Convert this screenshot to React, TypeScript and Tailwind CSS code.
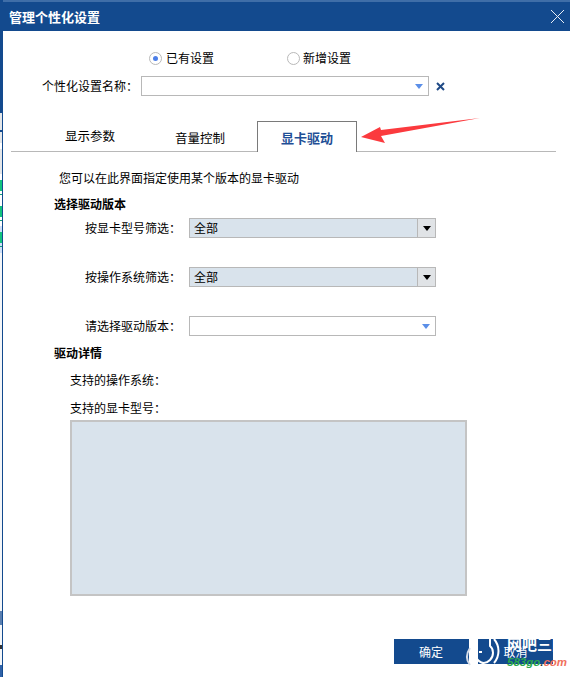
import React from 'react';

const font = { fontFamily: '"Noto Sans CJK SC", "Liberation Sans", sans-serif' };

const Caret = ({ color }: { color: string }) => (
  <svg width="8" height="5" viewBox="0 0 8 5">
    <path d="M0 0H8L4 5Z" fill={color} />
  </svg>
);

const Radio = ({ checked }: { checked?: boolean }) => (
  <span className="w-[13px] h-[13px] rounded-full border border-[#b9b9b9] bg-white flex items-center justify-center">
    {checked && <span className="w-[5px] h-[5px] rounded-full bg-[#4d7fe8]" />}
  </span>
);

const FilterRow = ({ label, className }: { label: string; className?: string }) => (
  <div className={`flex items-center h-5 ${className ?? ''}`}>
    <span className="w-[104px] text-xs text-black whitespace-nowrap">{label}</span>
    <div className="w-[247px] h-5 border border-[#b8b8b8] bg-[#d9e3ec] flex">
      <span className="flex-1 pl-1 text-xs leading-[18px] text-black">全部</span>
      <span className="w-[18px] border-l border-[#b8b8b8] bg-[#e0e3e6] flex items-center justify-center">
        <Caret color="#000" />
      </span>
    </div>
  </div>
);

export default function App() {
  return (
    <div className="relative w-[570px] h-[677px] bg-white overflow-hidden flex" style={font}>
      {/* 背后窗口露出的一条 */}
      <div className="w-[2px] h-full flex flex-col bg-[#f4f6f8]">
        <div className="h-[113px] bg-[#134a8e]" />
        <div className="h-[17px] bg-[#e4e6e8]" />
        <div className="h-[2px] bg-[#134a8e]" />
        <div className="h-[11px] bg-[#e4e6e8]" />
        <div className="h-[6px] bg-white" />
        <div className="h-[25px] bg-[#e4e6e8]" />
        <div className="h-[6px] bg-white" />
        <div className="h-[11px] bg-[#12c47e]" />
        <div className="h-[3px] bg-white" />
        <div className="h-[1px] bg-[#12a07a]" />
        <div className="h-[11px] bg-white" />
        <div className="h-[11px] bg-[#12c47e]" />
        <div className="h-[3px] bg-white" />
        <div className="h-[1px] bg-[#12a07a]" />
        <div className="h-[5px] bg-white" />
        <div className="h-[6px] bg-[#cfe0f8]" />
        <div className="h-[11px] bg-[#12c47e]" />
        <div className="h-[3px] bg-[#cfe0f8]" />
        <div className="h-[1px] bg-[#12a07a]" />
        <div className="h-[6px] bg-[#cfe0f8]" />
        <div className="flex-1" />
        <div className="h-[14px] bg-[#5a7fb0]" />
        <div className="h-[20px]" />
        <div className="h-[4px] bg-[#333]" />
        <div className="h-[16px]" />
        <div className="h-[12px] bg-[#2f62a8]" />
      </div>

      <div className="flex-1 flex flex-col border-l border-[#134a8e] relative">
        {/* 标题栏 */}
        <div className="h-[31px] border-t-[2px] border-[#3f6ea8] bg-[#134a8e] flex items-center justify-between pl-[6px] pr-[5px] shrink-0">
          <span className="text-[13px] font-bold text-white leading-none">管理个性化设置</span>
          <svg width="15" height="15" viewBox="0 0 15 15" fill="none" stroke="#e8eef6" strokeWidth="1">
            <path d="M1 1L14 14M14 1L1 14" />
          </svg>
        </div>

        {/* 单选 */}
        <div className="flex items-center h-[14px] mt-[20px] pl-[146px] text-xs text-black">
          <Radio checked />
          <span className="ml-[4px] w-[121px]">已有设置</span>
          <Radio />
          <span className="ml-[3px]">新增设置</span>
        </div>

        {/* 名称 */}
        <div className="flex items-center mt-[11px] h-5 pl-[39px]">
          <span className="w-[99px] text-xs text-black whitespace-nowrap">个性化设置名称：</span>
          <div className="w-[288px] h-5 border border-[#b8b8b8] flex items-center justify-end pr-[5px]">
            <Caret color="#5b8fe8" />
          </div>
          <svg className="ml-[7px]" width="9" height="9" viewBox="0 0 9 9" fill="none" stroke="#1f4a86" strokeWidth="2">
            <path d="M1 1L8 8M8 1L1 8" />
          </svg>
        </div>

        {/* 标签页 */}
        <div className="flex items-end h-[31px] mt-[25px] ml-[8px] w-[545px] border-b border-[#b8b8b8]">
          <div className="w-[101px] text-[12.5px] text-black pb-[5px] pl-[54px] whitespace-nowrap">显示参数</div>
          <div className="w-[146px] text-[12.5px] text-black pb-[3px] pl-[63px] whitespace-nowrap">音量控制</div>
          <div className="w-[100px] h-[31px] -mb-[1px] -ml-[1px] border border-b-0 border-[#7a7a7a] bg-white text-center text-[13px] font-bold text-[#1f4f96] leading-[32px]">
            显卡驱动
          </div>
        </div>

        {/* 说明 */}
        <div className="mt-[17px] pl-[56px] text-xs text-black leading-[18px]">您可以在此界面指定使用某个版本的显卡驱动</div>
        <div className="mt-[8px] pl-[51px] text-xs font-bold text-black leading-[18px]">选择驱动版本</div>

        <div className="pl-[82px]">
          <FilterRow label="按显卡型号筛选：" className="mt-[5px]" />
          <FilterRow label="按操作系统筛选：" className="mt-[29px]" />
          <div className="flex items-center h-5 mt-[29px]">
            <span className="w-[104px] text-xs text-black whitespace-nowrap">请选择驱动版本：</span>
            <div className="w-[247px] h-5 border border-[#b8b8b8] flex items-center justify-end pr-[5px]">
              <Caret color="#5b8fe8" />
            </div>
          </div>
        </div>

        {/* 驱动详情 */}
        <div className="mt-[8px] pl-[51px] text-xs font-bold text-black leading-[18px]">驱动详情</div>
        <div className="mt-[9px] pl-[67px] text-xs text-black leading-[18px]">支持的操作系统：</div>
        <div className="mt-[10px] pl-[67px] text-xs text-black leading-[18px]">支持的显卡型号：</div>
        <div className="mt-[3px] ml-[67px] w-[397px] h-[176px] border-2 border-[#c4c4c4] bg-[#d9e3ec]" />

        {/* 按钮 */}
        <div className="flex gap-[9px] mt-[43px] ml-[391px]">
          <button className="w-[75px] h-[25px] bg-[#134a8e] text-white text-xs pr-[1px]">确定</button>
          <button className="w-[75px] h-[25px] bg-[#134a8e] text-white text-xs">取消</button>
        </div>
      </div>

      {/* 红色箭头 */}
      <svg className="absolute left-[360px] top-[115px]" width="122" height="32" viewBox="0 0 122 32">
        <path d="M1 22L20 12L21 15L120 3L21 21L25 28Z" fill="#fb3a3e" />
      </svg>

      {/* 水印 */}
      <div className="absolute left-[465px] top-[632px] w-[105px] h-[45px]">
        <svg className="absolute left-[0px] top-[6px]" width="40" height="30" viewBox="0 0 40 30" fill="none" stroke="#fff" strokeWidth="2">
          <path d="M5 10C1 16 1 22 5 27" stroke="#d5dce8" />
          <path d="M25 1V8C29 11 29 18 25 22C20 27 12 26 10 15" />
          <path d="M14 14H17" />
          <path d="M29 1C35 8 35 18 29 25" />
        </svg>
        <span className="absolute left-[42px] top-[4px] text-[15px] font-bold text-white leading-none whitespace-nowrap">网吧三国</span>
        <span className="absolute left-[42px] top-[25px] text-[11.5px] font-bold italic leading-none whitespace-nowrap" style={{ fontFamily: '"Liberation Sans", sans-serif' }}>
          <span className="text-[#2aa84a]">583go</span>
          <span className="text-[#333]">.</span>
          <span className="text-[#f0705c]">com</span>
        </span>
      </div>
    </div>
  );
}
